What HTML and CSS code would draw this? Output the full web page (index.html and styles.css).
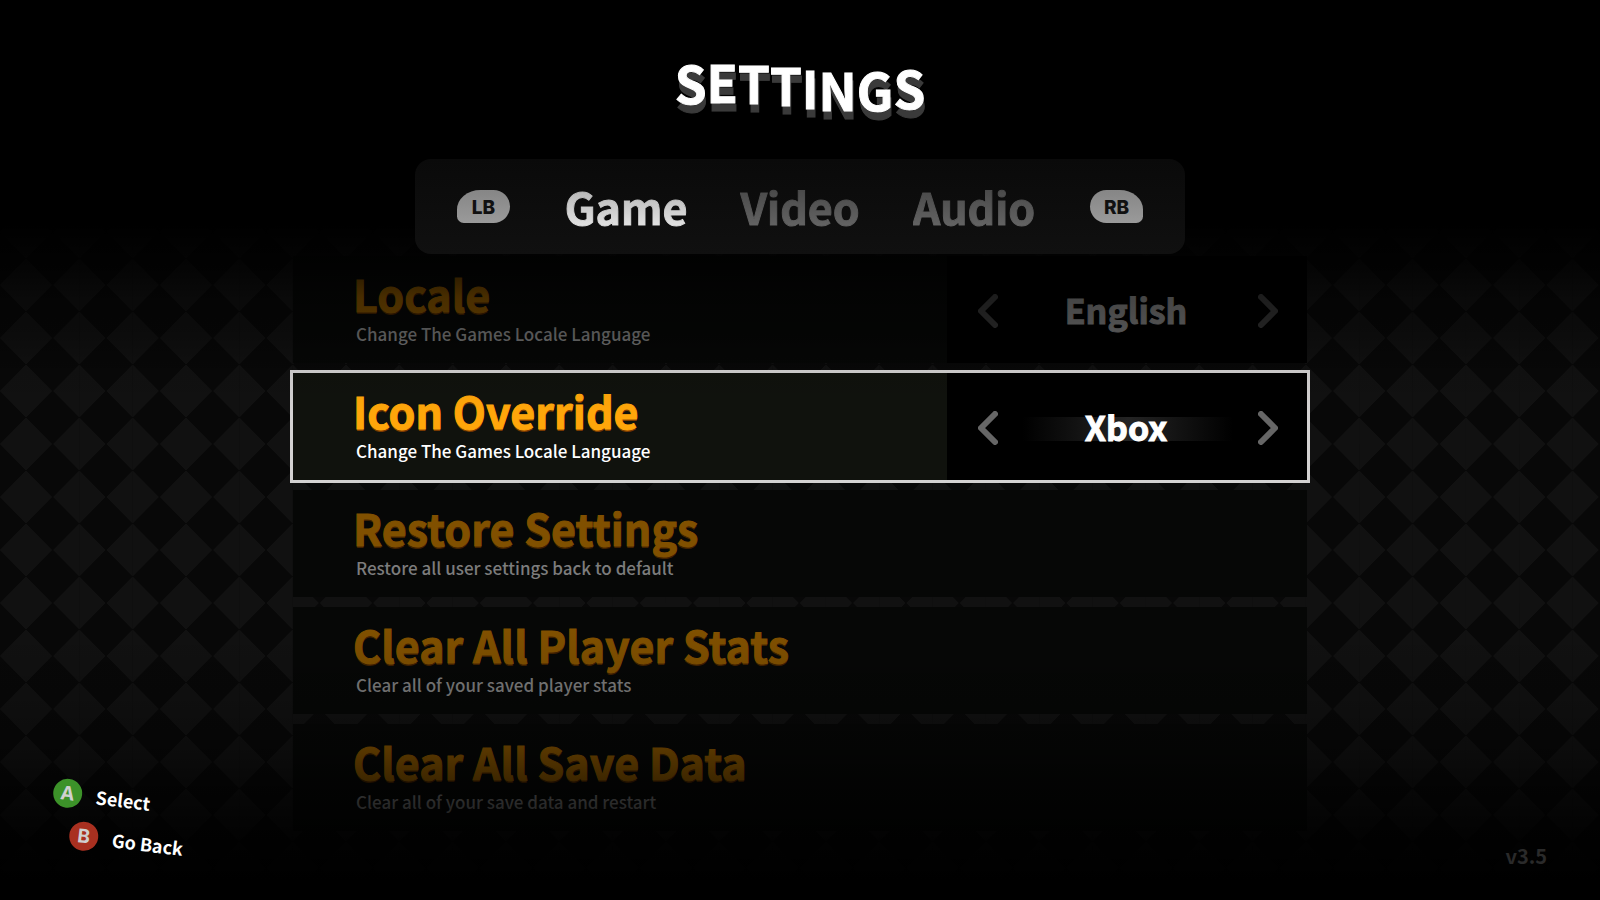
FILE: index.html
```html
<!DOCTYPE html>
<html lang="en">
<head>
<meta charset="utf-8">
<title>Settings</title>
<link rel="stylesheet" href="styles.css">
</head>
<body>
<div class="screen">
  <header class="header">
    <h1 class="title">
      <svg class="title-art" width="260" height="72" viewBox="0 0 260 72">
        <text class="title-text" x="130" y="50" text-anchor="middle" dy="1 -1 1 2 3 2 0 -2">SETTINGS</text>
      </svg>
    </h1>
    <nav class="tabs" aria-label="Settings sections">
      <button class="bumper bumper-left" type="button">LB</button>
      <div class="tab-list">
        <button class="tab tab-active" type="button">Game</button>
        <button class="tab" type="button">Video</button>
        <button class="tab" type="button">Audio</button>
      </div>
      <button class="bumper bumper-right" type="button">RB</button>
    </nav>
  </header>

  <main class="settings">
    <section class="row">
      <div class="row-text">
        <h2 class="row-title">Locale</h2>
        <p class="row-desc">Change The Games Locale Language</p>
      </div>
      <div class="picker">
        <button class="arrow" type="button" aria-label="Previous locale"><svg width="20" height="34" viewBox="0 0 20 34"><path d="M17 3 3 17l14 14"/></svg></button>
        <span class="value">English</span>
        <button class="arrow" type="button" aria-label="Next locale"><svg width="20" height="34" viewBox="0 0 20 34"><path d="m3 3 14 14L3 31"/></svg></button>
      </div>
    </section>
    <section class="row row-selected">
      <div class="row-text">
        <h2 class="row-title">Icon Override</h2>
        <p class="row-desc">Change The Games Locale Language</p>
      </div>
      <div class="picker">
        <button class="arrow" type="button" aria-label="Previous icon set"><svg width="20" height="34" viewBox="0 0 20 34"><path d="M17 3 3 17l14 14"/></svg></button>
        <span class="value">Xbox</span>
        <button class="arrow" type="button" aria-label="Next icon set"><svg width="20" height="34" viewBox="0 0 20 34"><path d="m3 3 14 14L3 31"/></svg></button>
      </div>
    </section>
    <button class="row" type="button">
      <span class="row-text">
        <span class="row-title">Restore Settings</span>
        <span class="row-desc">Restore all user settings back to default</span>
      </span>
    </button>
    <button class="row" type="button">
      <span class="row-text">
        <span class="row-title">Clear All Player Stats</span>
        <span class="row-desc">Clear all of your saved player stats</span>
      </span>
    </button>
    <button class="row" type="button">
      <span class="row-text">
        <span class="row-title">Clear All Save Data</span>
        <span class="row-desc">Clear all of your save data and restart</span>
      </span>
    </button>
  </main>

  <footer class="footer">
    <div class="hints">
      <button class="hint" type="button"><span class="pad pad-a">A</span>Select</button>
      <button class="hint hint-back" type="button"><span class="pad pad-b">B</span>Go Back</button>
    </div>
    <span class="version">v3.5</span>
  </footer>
</div>
</body>
</html>
```
FILE: styles.css
```css
* {
  box-sizing: border-box;
}

body {
  margin: 0;
  background: #000;
  color: #fff;
  font-family: "Noto Sans CJK SC", "Noto Sans", sans-serif;
}

button {
  margin: 0;
  padding: 0;
  border: 0;
  background: none;
  color: inherit;
  font: inherit;
  text-align: left;
}

.screen {
  position: relative;
  display: flex;
  flex-direction: column;
  min-height: 100vh;
  overflow: hidden;
  background-color: #080808;
  background-image:
    linear-gradient(45deg, #111 25%, transparent 25%, transparent 75%, #111 75%),
    linear-gradient(-45deg, #111 25%, transparent 25%, transparent 75%, #111 75%);
  background-size: calc(100% / 30) 53px;
  background-position: 26px 20px;
}

/* Darkens the top and bottom of the screen, rows included */
.screen::after {
  content: "";
  position: absolute;
  inset: 0;
  pointer-events: none;
  background: linear-gradient(
    #000 25%,
    rgba(0, 0, 0, 0.7) 30%,
    rgba(0, 0, 0, 0.44) 33%,
    rgba(0, 0, 0, 0.32) 37%,
    rgba(0, 0, 0, 0.06) 41%,
    transparent 46%,
    transparent 70%,
    rgba(0, 0, 0, 0.12) 77%,
    rgba(0, 0, 0, 0.3) 83%,
    rgba(0, 0, 0, 0.6) 88%,
    rgba(0, 0, 0, 0.9) 94%,
    #000 98%
  );
}

.header {
  position: relative;
  z-index: 1;
  display: flex;
  flex-direction: column;
  align-items: center;
  gap: 34px;
  padding-top: 53px;
}

.title {
  margin: 0;
  line-height: 0;
}

.title-art {
  overflow: visible;
}

.title-text {
  fill: #fff;
  stroke: #fff;
  stroke-width: 1px;
  font-size: 51px;
  font-weight: 700;
  filter: drop-shadow(1px 8px 0 #3a3a3a);
}

.tabs {
  display: flex;
  align-items: center;
  justify-content: space-between;
  width: 770px;
  max-width: 100%;
  height: 95px;
  padding: 0 42px;
  border-radius: 16px;
  background: linear-gradient(#0a0a0a, #101010);
}

.tab-list {
  display: flex;
  gap: 53px;
  padding-bottom: 2px;
}

.tab {
  color: transparent;
  font-size: 43px;
  font-weight: 700;
  line-height: 62px;
  -webkit-text-stroke: 1px transparent;
  background: linear-gradient(#484848 20%, #626262 80%);
  background-clip: text;
}

.tab-active {
  background-image: linear-gradient(#b4b4b4 20%, #e0e0e0 80%);
}

.bumper {
  width: 53px;
  height: 33px;
  background: linear-gradient(#868686, #9a9a9a);
  color: #111;
  font-family: Inter, sans-serif;
  font-size: 19px;
  font-weight: 800;
  line-height: 36px;
  text-align: center;
}

.bumper-left {
  border-radius: 24px 17px 17px 7px / 20px 17px 17px 7px;
}

.bumper-right {
  border-radius: 17px 24px 7px 17px / 17px 20px 7px 17px;
}

.settings {
  display: flex;
  flex-direction: column;
  gap: 10px;
  width: 1014px;
  max-width: 100%;
  margin: 2px auto 0;
}

.row {
  display: flex;
  min-height: 107px;
  background: #060706;
}

.row-selected {
  background: #10120d;
  outline: 3px solid #d4d2d2;
}

.row-text {
  display: flex;
  flex: 1;
  flex-direction: column;
  gap: 5px;
  padding: 13px 0 0 60px;
}

.row-title {
  margin: 0;
  color: #805000;
  font-size: 43px;
  font-weight: 700;
  line-height: 48px;
  -webkit-text-stroke: 1px currentColor;
  text-shadow: 0 2px 0 #402000;
}

.row-desc {
  margin: 0;
  padding-left: 3px;
  color: #7c7c7c;
  font-size: 17px;
  font-weight: 500;
  line-height: 24px;
}

.row-selected .row-title {
  color: #ffa60a;
  text-shadow: 0 2px 0 #7a3a00;
}

.row-selected .row-desc {
  color: #fff;
}

.picker {
  display: flex;
  align-items: center;
  justify-content: space-between;
  width: 360px;
  padding: 2px 29px 0 31px;
  background: #000;
}

.arrow {
  height: 34px;
}

.arrow svg {
  display: block;
  fill: none;
  stroke: #333;
  stroke-width: 6;
  stroke-linecap: round;
  stroke-linejoin: round;
}

.value {
  width: 210px;
  padding: 0 4px 2px 0;
  color: #7a7a7a;
  font-size: 34px;
  font-weight: 700;
  line-height: 50px;
  text-align: center;
  -webkit-text-stroke: 1px currentColor;
}

.row-selected .arrow svg {
  stroke: #666;
}

.row-selected .value {
  color: #fff;
  background: linear-gradient(90deg, transparent, #242424 50%, transparent) 0 15px / 100% 24px no-repeat;
}

.footer {
  position: absolute;
  z-index: 1;
  right: 53px;
  bottom: 28px;
  left: 53px;
  display: flex;
  align-items: flex-end;
  justify-content: space-between;
}

.hints {
  display: flex;
  flex-direction: column;
  align-items: flex-start;
  gap: 14px;
  padding-bottom: 16px;
}

.hint {
  display: flex;
  align-items: center;
  gap: 14px;
  font-size: 18px;
  font-weight: 700;
  line-height: 30px;
  transform: rotate(7deg);
}

.hint-back {
  margin-left: 16px;
}

.pad {
  width: 29px;
  height: 29px;
  border-radius: 50%;
  color: #d0d0d0;
  font-family: Inter, sans-serif;
  font-size: 19px;
  line-height: 29px;
  text-align: center;
}

.pad-a {
  background: #3c9229;
}

.pad-b {
  background: #a93020;
}

.version {
  color: #2a2a2a;
  font-size: 20px;
  font-weight: 700;
  line-height: 32px;
}
```
